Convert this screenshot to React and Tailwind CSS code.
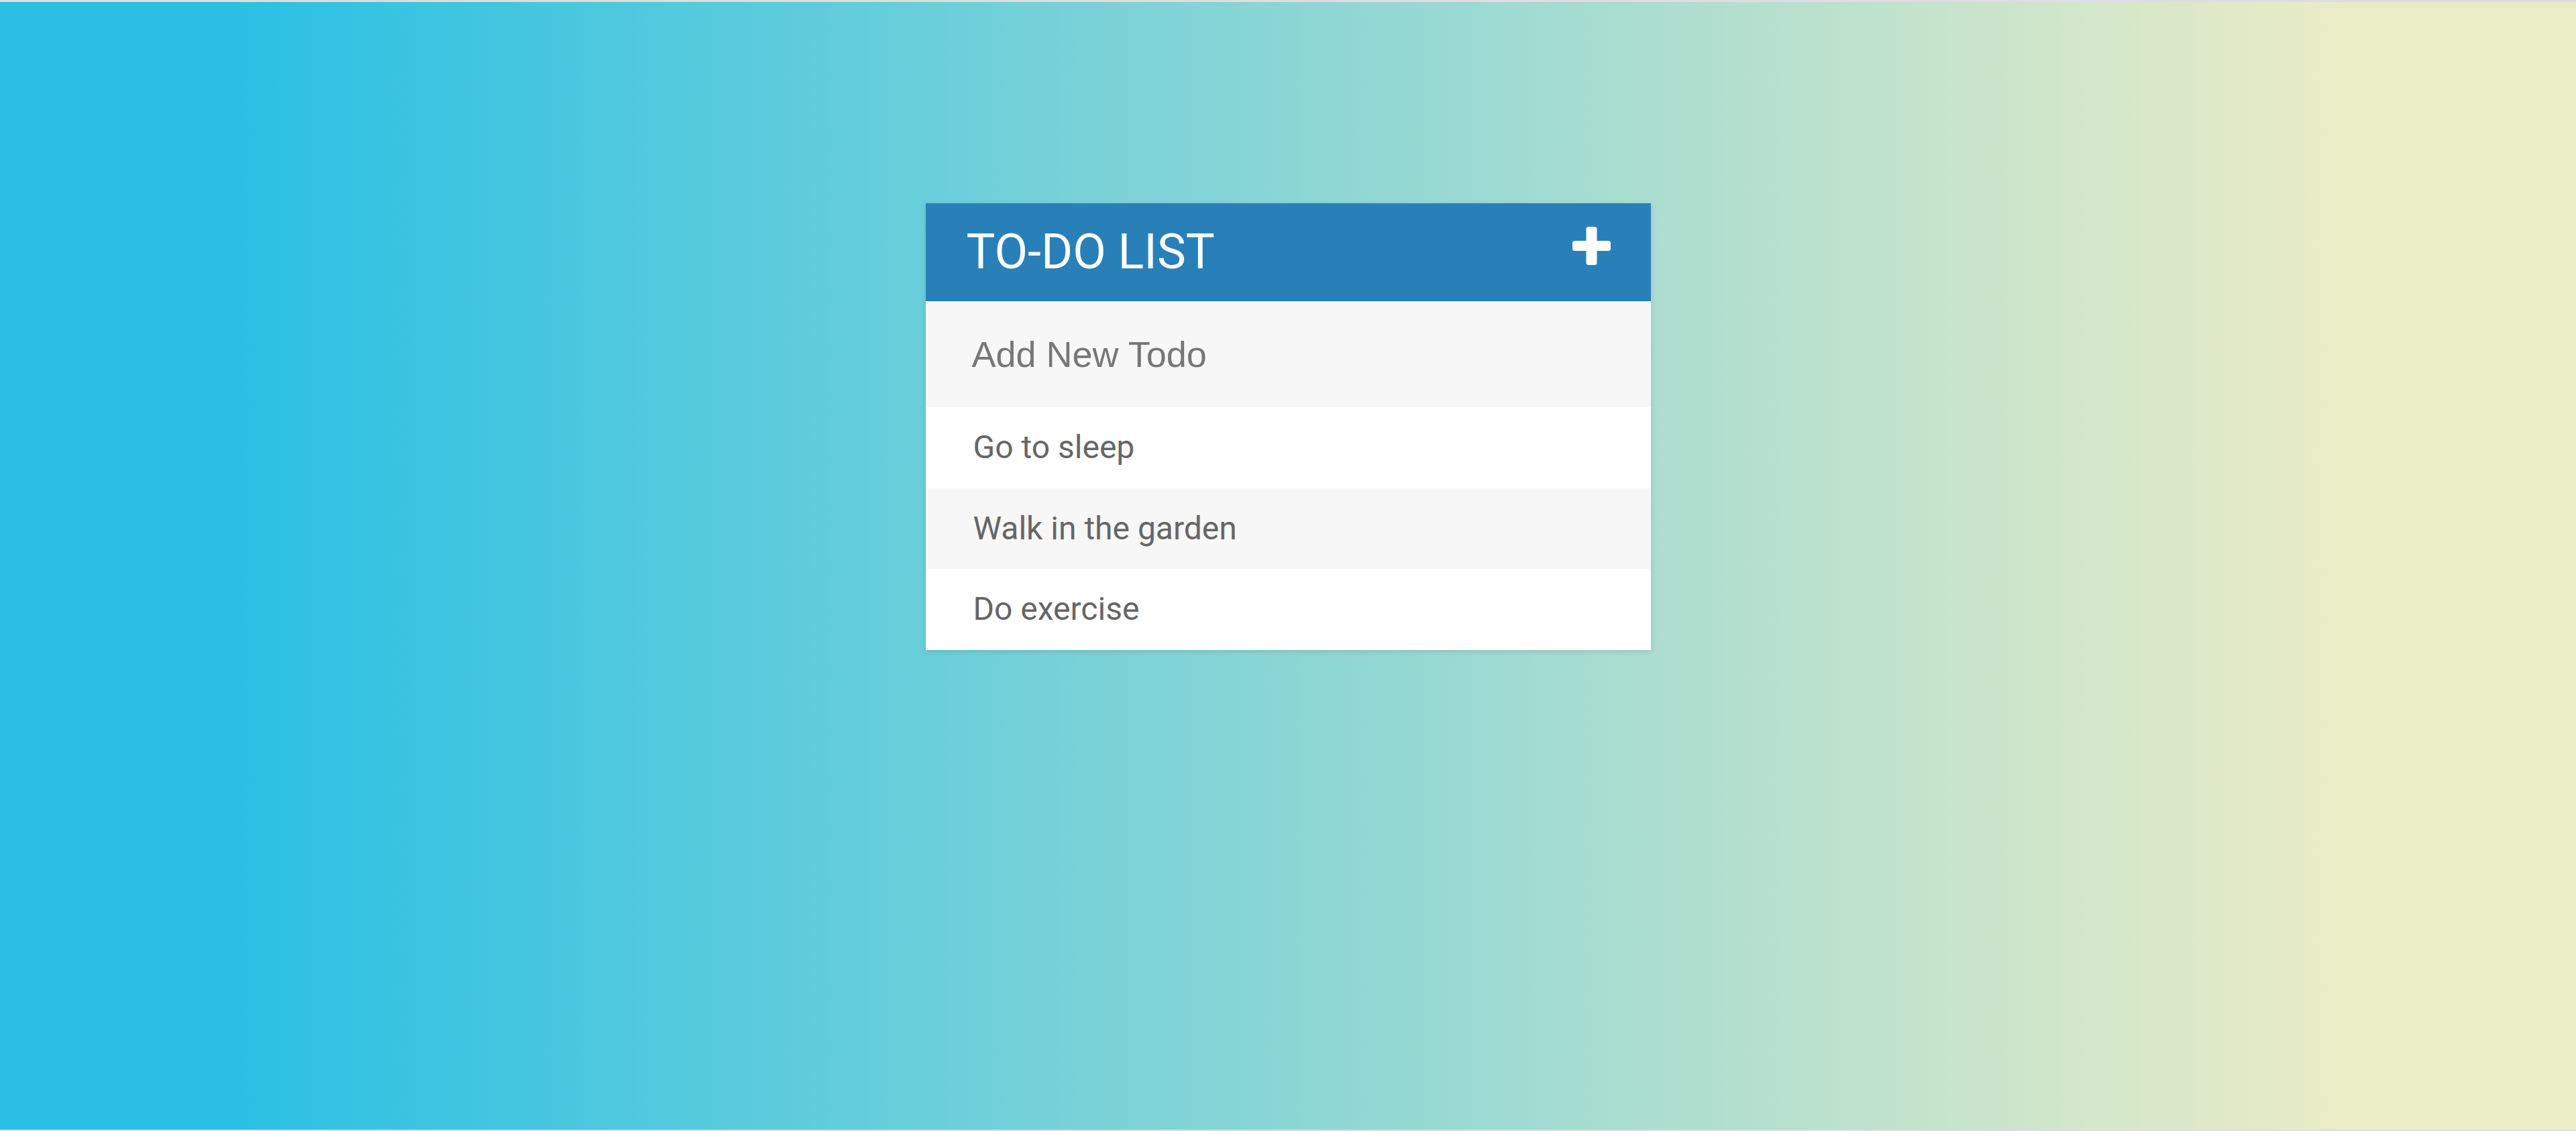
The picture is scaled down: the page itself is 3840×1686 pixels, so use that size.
export default function App() {
  const items = [
    { text: "Go to sleep", bg: "bg-white" },
    { text: "Walk in the garden", bg: "bg-[#f7f7f7]" },
    { text: "Do exercise", bg: "bg-white" },
  ];
  return (
    <div className="flex h-[1686px] w-full flex-col bg-[#dcdee2]">
      <div className="h-[3px] w-full bg-[#dcdee2]" />
      <main className="flex flex-1 justify-center bg-linear-to-r/srgb from-[#2bc0e4] from-[9%] to-[#eaecc6] to-[91%] pt-[300px]">
        <div className="flex h-fit w-[1081px] flex-col shadow-[0_2px_8px_rgba(0,0,0,0.12)]">
          <header className="flex h-[146px] items-center justify-between bg-[#2980b9] pl-[61px] pr-[60px]">
            <h1 className="text-[72px] leading-none font-normal text-white [font-family:Roboto,'Liberation_Sans',sans-serif]">
              TO-DO LIST
            </h1>
            <svg
              width="57"
              height="57"
              viewBox="0 0 57 57"
              className="mb-[19px]"
              aria-label="add"
            >
              <rect x="20.5" y="0" width="16" height="57" rx="3.5" fill="#fff" />
              <rect x="0" y="21" width="57" height="15" rx="3.5" fill="#fff" />
            </svg>
          </header>
          <div className="flex h-[158px] items-center bg-[#f7f7f7]">
            <input
              type="text"
              placeholder="Add New Todo"
              className="h-full w-full bg-transparent pl-[69px] text-[54px] text-[#777] outline-none placeholder:text-[#777] [font-family:'Liberation_Sans',Arial,sans-serif]"
            />
          </div>
          <ul>
            {items.map((it) => (
              <li
                key={it.text}
                className={`flex h-[120.5px] items-center pl-[71px] text-[48px] leading-none text-[#666] [font-family:Roboto,'Liberation_Sans',sans-serif] ${it.bg}`}
              >
                {it.text}
              </li>
            ))}
          </ul>
        </div>
      </main>
      <div className="h-[2px] w-full bg-[#dcdee2]" />
    </div>
  );
}
